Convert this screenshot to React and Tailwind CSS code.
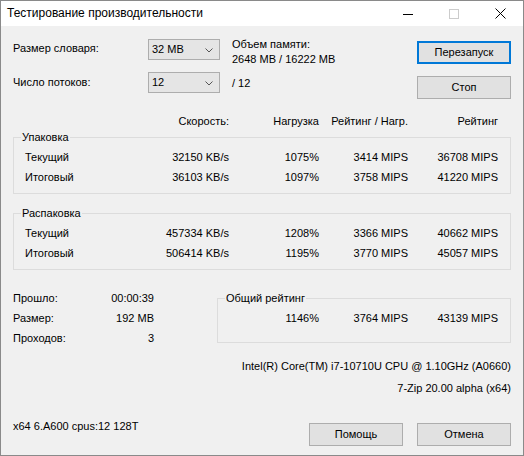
import React from 'react';

const Combo = ({ value }) => (
  <div className="w-[72px] h-[21px] bg-[#e5e5e5] border border-[#adadad] flex items-center pl-[3px] pr-[6px]">
    <span className="flex-1 leading-[15px]">{value}</span>
    <svg width="8" height="5" viewBox="0 0 8 5" className="mt-[1px]">
      <polyline points="0.5,0.5 4,4 7.5,0.5" fill="none" stroke="#555" strokeWidth="1" />
    </svg>
  </div>
);

const Button = ({ children, primary }) => (
  <div
    className={
      'w-[94px] h-[23px] bg-[#e1e1e1] flex items-center justify-center leading-[15px] ' +
      (primary ? 'border-2 border-[#0078d7]' : 'border border-[#adadad]')
    }
  >
    {children}
  </div>
);

const GroupBox = ({ title, className, children }) => (
  <div className={'relative border border-[#dcdcdc] ' + className}>
    <span className="absolute -top-[8px] left-[7px] px-[1px] leading-[15px] bg-[#f0f0f0]">{title}</span>
    {children}
  </div>
);

// label + speed | load | rating/load | rating
const ResultRow = ({ label, speed, load, perLoad, rating }) => (
  <div className="flex h-[20px] items-center pl-[11px]">
    <div className="w-[204px] flex justify-between">
      <span>{label}</span>
      <span>{speed}</span>
    </div>
    <span className="w-[90px] text-right">{load}</span>
    <span className="w-[89px] text-right">{perLoad}</span>
    <span className="w-[90px] text-right">{rating}</span>
  </div>
);

const StatRow = ({ label, value }) => (
  <div className="w-[141px] h-[20px] flex items-center justify-between">
    <span>{label}</span>
    <span>{value}</span>
  </div>
);

const App = () => {
  return (
    <div
      className="w-[524px] h-[456px] border border-[#8a8a8a] bg-[#f0f0f0] flex flex-col text-[11px] leading-[15px] text-black"
      style={{ fontFamily: '"Liberation Sans", Arial, sans-serif' }}
    >
      {/* title bar */}
      <div className="h-[25px] bg-white flex items-center shrink-0">
        <span className="pl-[6px] flex-1 text-[12px]">Тестирование производительности</span>
        <div className="w-[46px] h-full flex items-center justify-center">
          <svg width="10" height="10" viewBox="0 0 10 10">
            <line x1="0" y1="5.5" x2="10" y2="5.5" stroke="#000" strokeWidth="1" />
          </svg>
        </div>
        <div className="w-[46px] h-full flex items-center justify-center">
          <svg width="10" height="10" viewBox="0 0 10 10">
            <rect x="0.5" y="0.5" width="9" height="9" fill="none" stroke="#cccccc" strokeWidth="1" />
          </svg>
        </div>
        <div className="w-[46px] h-full flex items-center justify-center">
          <svg width="11" height="11" viewBox="0 0 11 11">
            <path d="M0.5 0.5 L10.5 10.5 M10.5 0.5 L0.5 10.5" stroke="#000" strokeWidth="1" />
          </svg>
        </div>
      </div>

      <div className="flex-1 flex flex-col pt-[11px]">
        {/* settings */}
        <div className="flex h-[63px] pl-[12px] pr-[12px]">
          <div className="flex flex-col">
            <div className="flex items-start h-[35px]">
              <span className="w-[135px] mt-[4px]">Размер словаря:</span>
              <div className="mt-[2px]">
                <Combo value="32 MB" />
              </div>
              <div className="ml-[12px]">
                <div>Объем памяти:</div>
                <div>2648 MB / 16222 MB</div>
              </div>
            </div>
            <div className="flex items-center h-[21px]">
              <span className="w-[135px]">Число потоков:</span>
              <Combo value="12" />
              <span className="ml-[12px] mt-[1px]">/ 12</span>
            </div>
          </div>
          <div className="ml-auto flex flex-col gap-[12px] pt-[4px]">
            <Button primary>Перезапуск</Button>
            <Button>Стоп</Button>
          </div>
        </div>

        {/* column headers */}
        <div className="flex mt-[14px] pl-[12px]">
          <span className="w-[216px] text-right">Скорость:</span>
          <span className="w-[90px] text-right">Нагрузка</span>
          <span className="w-[89px] text-right">Рейтинг / Нагр.</span>
          <span className="w-[90px] text-right">Рейтинг</span>
        </div>

        <GroupBox title="Упаковка" className="mx-[12px] mt-[8px] pt-[9px] pb-[6px]">
          <ResultRow label="Текущий" speed="32150 KB/s" load="1075%" perLoad="3414 MIPS" rating="36708 MIPS" />
          <ResultRow label="Итоговый" speed="36103 KB/s" load="1097%" perLoad="3758 MIPS" rating="41220 MIPS" />
        </GroupBox>

        <GroupBox title="Распаковка" className="mx-[12px] mt-[19px] pt-[9px] pb-[6px]">
          <ResultRow label="Текущий" speed="457334 KB/s" load="1208%" perLoad="3366 MIPS" rating="40662 MIPS" />
          <ResultRow label="Итоговый" speed="506414 KB/s" load="1195%" perLoad="3770 MIPS" rating="45057 MIPS" />
        </GroupBox>

        {/* totals */}
        <div className="flex mt-[18px] pl-[12px] pr-[12px]">
          <div className="flex flex-col">
            <StatRow label="Прошло:" value="00:00:39" />
            <StatRow label="Размер:" value="192 MB" />
            <StatRow label="Проходов:" value="3" />
          </div>
          <GroupBox title="Общий рейтинг" className="ml-auto w-[294px] mt-[10px] h-[45px] pt-[9px]">
            <div className="flex h-[20px] items-center">
              <span className="w-[101px] text-right">1146%</span>
              <span className="w-[89px] text-right">3764 MIPS</span>
              <span className="w-[90px] text-right">43139 MIPS</span>
            </div>
          </GroupBox>
        </div>

        <div className="mt-[8px] pr-[12px] text-right h-[20px] flex items-center justify-end">
          Intel(R) Core(TM) i7-10710U CPU @ 1.10GHz (A0660)
        </div>
        <div className="mt-[2px] pr-[12px] text-right h-[20px] flex items-center justify-end">
          7-Zip 20.00 alpha (x64)
        </div>

        {/* footer */}
        <div className="flex items-start mt-[21px] pl-[12px] pr-[12px]">
          <span>x64 6.A600 cpus:12 128T</span>
          <div className="ml-auto flex gap-[14px] mt-[4px]">
            <Button>Помощь</Button>
            <Button>Отмена</Button>
          </div>
        </div>
      </div>
    </div>
  );
};

export default App;
